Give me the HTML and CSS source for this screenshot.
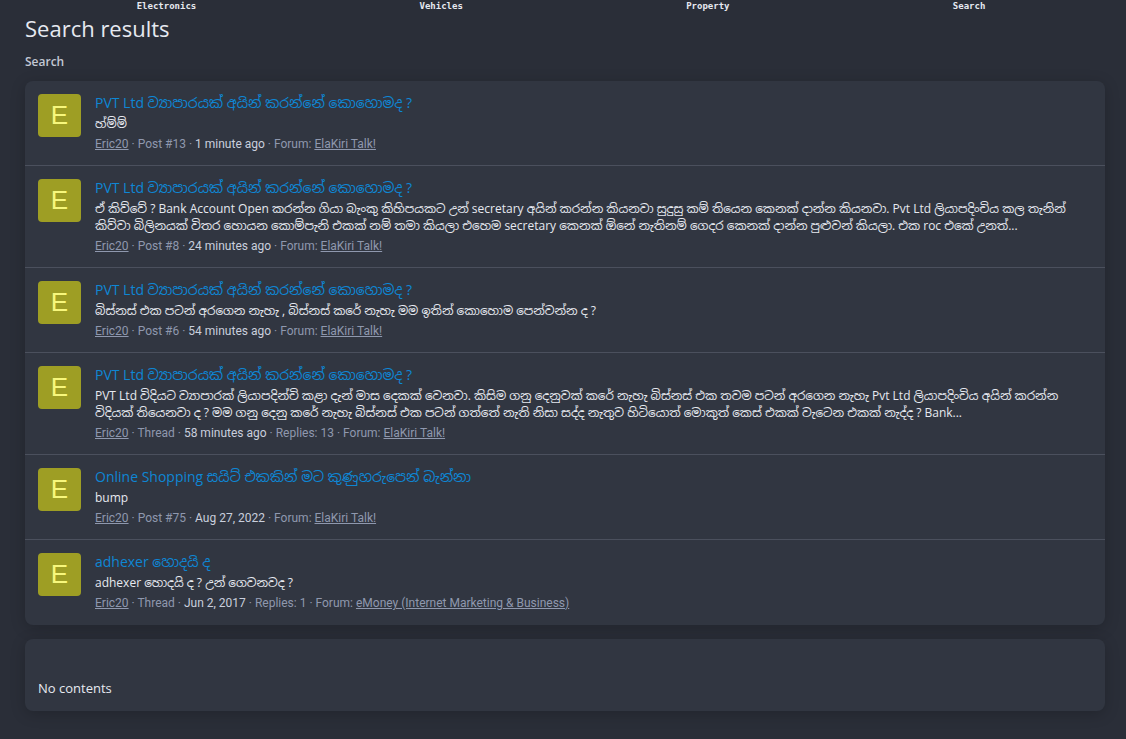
FILE: index.html
```html
<!DOCTYPE html>
<html lang="si">
<head>
<meta charset="utf-8">
<meta name="viewport" content="width=device-width, initial-scale=1">
<title>Search results</title>
<link rel="stylesheet" href="styles.css">
</head>
<body>
<div class="page">
<nav class="nav">
<a href="#">Electronics</a>
<a href="#">Vehicles</a>
<a href="#">Property</a>
<a href="#">Search</a>
</nav>
<h1 class="page-title">Search results</h1>
<div class="crumbs"><a href="#">Search</a></div>
<main>
<ol class="block results">
<li class="result">
<a class="avatar" href="#">E</a>
<div class="result-main">
<h3 class="title"><a href="#">PVT Ltd ව්‍යාපාරයක් අයින් කරන්නේ කොහොමද ?</a></h3>
<div class="snippet">හ්ම්ම්</div>
<div class="meta"><a href="#">Eric20</a> · Post #13 · <time>1 minute ago</time> · Forum: <a href="#">ElaKiri Talk!</a></div>
</div>
</li>
<li class="result">
<a class="avatar" href="#">E</a>
<div class="result-main">
<h3 class="title"><a href="#">PVT Ltd ව්‍යාපාරයක් අයින් කරන්නේ කොහොමද ?</a></h3>
<div class="snippet">ඒ කිව්වේ ? Bank Account Open කරන්න ගියා බැංකු කිහිපයකට උන් secretary අයින් කරන්න කියනවා සුදුසු කම් තියෙන කෙනක් දාන්න කියනවා. Pvt Ltd ලියාපදිංචිය කල තැනින් <br>කිව්වා බිලිනයක් විතර හොයන කොම්පැනි එකක් නම් තමා කියලා එහෙම secretary කෙනක් ඕනේ නැතිනම් ගෙදර කෙනක් දාන්න පුළුවන් කියලා. එක roc එකේ උනත්...</div>
<div class="meta"><a href="#">Eric20</a> · Post #8 · <time>24 minutes ago</time> · Forum: <a href="#">ElaKiri Talk!</a></div>
</div>
</li>
<li class="result">
<a class="avatar" href="#">E</a>
<div class="result-main">
<h3 class="title"><a href="#">PVT Ltd ව්‍යාපාරයක් අයින් කරන්නේ කොහොමද ?</a></h3>
<div class="snippet">බිස්නස් එක පටන් අරගෙන නැහැ , බිස්නස් කරේ නැහැ මම ඉතින් කොහොම පෙන්වන්න ද ?</div>
<div class="meta"><a href="#">Eric20</a> · Post #6 · <time>54 minutes ago</time> · Forum: <a href="#">ElaKiri Talk!</a></div>
</div>
</li>
<li class="result">
<a class="avatar" href="#">E</a>
<div class="result-main">
<h3 class="title"><a href="#">PVT Ltd ව්‍යාපාරයක් අයින් කරන්නේ කොහොමද ?</a></h3>
<div class="snippet">PVT Ltd විදියට ව්‍යාපාරක් ලියාපදින්චි කළා දැන් මාස දෙකක් වෙනවා. කිසිම ගනු දෙනුවක් කරේ නැහැ බිස්නස් එක තවම පටන් අරගෙන නැහැ Pvt Ltd ලියාපදිංචිය අයින් කරන්න <br>විදියක් තියෙනවා ද ? මම ගනු දෙනු කරේ නැහැ බිස්නස් එක පටන් ගත්තේ නැති නිසා සද්ද නැතුව හිටියොත් මොකුත් කෙස් එකක් වැටෙන එකක් නැද්ද ? Bank...</div>
<div class="meta"><a href="#">Eric20</a> · Thread · <time>58 minutes ago</time> · Replies: 13 · Forum: <a href="#">ElaKiri Talk!</a></div>
</div>
</li>
<li class="result">
<a class="avatar" href="#">E</a>
<div class="result-main">
<h3 class="title"><a href="#">Online Shopping සයිට් එකකින් මට කුණුහරුපෙන් බැන්නා</a></h3>
<div class="snippet">bump</div>
<div class="meta"><a href="#">Eric20</a> · Post #75 · <time>Aug 27, 2022</time> · Forum: <a href="#">ElaKiri Talk!</a></div>
</div>
</li>
<li class="result">
<a class="avatar" href="#">E</a>
<div class="result-main">
<h3 class="title"><a href="#">adhexer හොදයි ද</a></h3>
<div class="snippet">adhexer හොදයි ද ? උන් ගෙවනවද ?</div>
<div class="meta"><a href="#">Eric20</a> · Thread · <time>Jun 2, 2017</time> · Replies: 1 · Forum: <a href="#">eMoney (Internet Marketing &amp; Business)</a></div>
</div>
</li>
</ol>
<section class="block empty">No contents</section>
</main>
</div>
</body>
</html>
```
FILE: styles.css
```css
* { box-sizing: border-box; }
body {
  margin: 0;
  background: #2a2e38;
  color: #e6e9f0;
  font: 13px/17px "Open Sans", "Noto Sans", "Noto Sans Sinhala", sans-serif;
}
a { color: inherit; text-decoration: none; }
.page { padding: 0 21px 28px 25px; }
.nav {
  display: flex;
  justify-content: space-around;
  padding-right: 8px;
  font: bold 9px/12px "DejaVu Sans Mono", monospace;
}
.page-title {
  margin: 0;
  font-size: 22px;
  line-height: 32px;
  font-weight: 400;
}
.crumbs {
  padding: 9px 0 11px;
  font-size: 12px;
  font-weight: 600;
  color: #c3c8d4;
}
.block {
  margin: 0 0 14px;
  background: #313641;
  border-radius: 8px;
  box-shadow: 0 3px 15px rgba(0, 0, 0, 0.2);
}
.results { padding: 0; list-style: none; }
.result {
  display: flex;
  gap: 14px;
  padding: 13px 13px 12px;
}
.result:last-child { padding-bottom: 13px; }
.result + .result { border-top: 1px solid #4b505d; }
.avatar {
  flex: none;
  width: 43px;
  height: 43px;
  border-radius: 4px;
  background: #9e9e24;
  color: #f7f77c;
  font: 26px/43px "Liberation Sans", Arial, sans-serif;
  text-align: center;
}
.result-main { flex: 1; min-width: 0; }
.title {
  margin: 0;
  font-size: 14px;
  line-height: 17px;
  font-weight: 400;
  color: #0e86d4;
}
.snippet { margin: 4px 0; font-size: 12px; white-space: nowrap; }
.meta { font-family: Roboto, sans-serif; font-size: 12px; color: #8f98ae; }
.meta a { text-decoration: underline; }
.meta time { color: #c9cfdd; }
.empty { padding: 41px 13px 14px; }
```
